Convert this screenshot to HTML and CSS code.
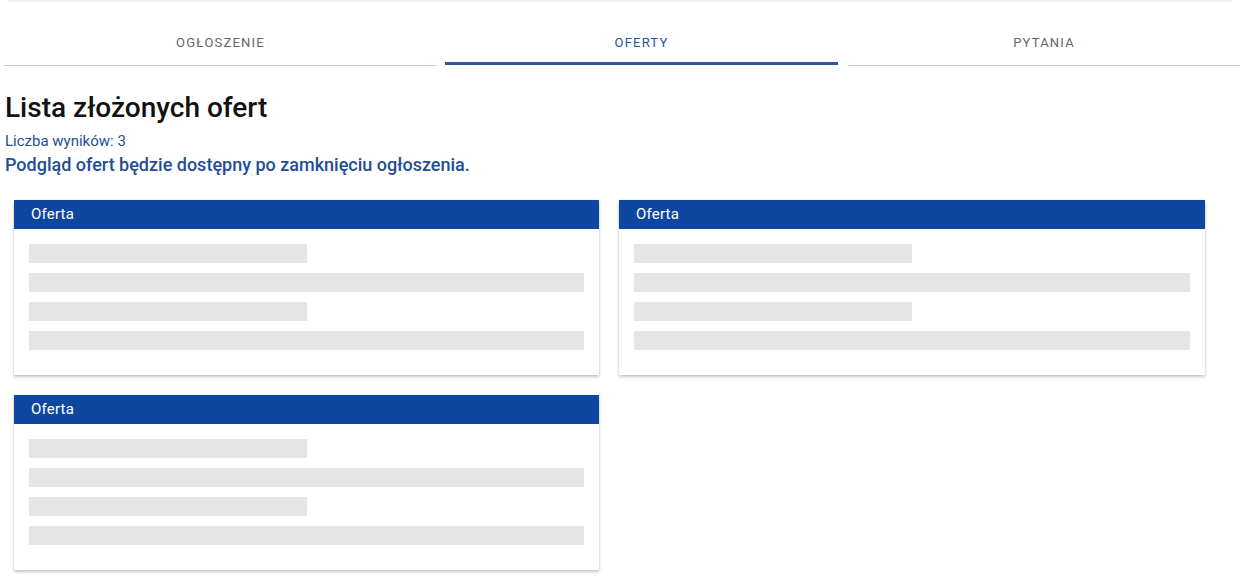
FILE: index.html
```html
<!DOCTYPE html>
<html lang="pl">
<head>
    <meta charset="UTF-8">
    <meta name="viewport" content="width=device-width, initial-scale=1.0">
    <title>Oferty</title>
    <link rel="stylesheet" href="styles.css">
</head>
<body>
    <div class="topbar"></div>

    <div class="tabs">
        <a href="#" class="tab tab-first">Ogłoszenie</a>
        <a href="#" class="tab tab-active">Oferty</a>
        <a href="#" class="tab tab-last">Pytania</a>
    </div>

    <div class="content">
        <h1 class="page-title">Lista złożonych ofert</h1>
        <div class="results">Liczba wyników: 3</div>
        <div class="notice">Podgląd ofert będzie dostępny po zamknięciu ogłoszenia.</div>

        <div class="offers">
            <div class="offer">
                <div class="offer-header">Oferta</div>
                <div class="offer-body">
                    <div class="skeleton half"></div>
                    <div class="skeleton"></div>
                    <div class="skeleton half"></div>
                    <div class="skeleton"></div>
                </div>
            </div>
            <div class="offer">
                <div class="offer-header">Oferta</div>
                <div class="offer-body">
                    <div class="skeleton half"></div>
                    <div class="skeleton"></div>
                    <div class="skeleton half"></div>
                    <div class="skeleton"></div>
                </div>
            </div>
            <div class="offer">
                <div class="offer-header">Oferta</div>
                <div class="offer-body">
                    <div class="skeleton half"></div>
                    <div class="skeleton"></div>
                    <div class="skeleton half"></div>
                    <div class="skeleton"></div>
                </div>
            </div>
        </div>
    </div>
</body>
</html>
```

FILE: styles.css
```css
body {
    margin: 0;
    padding: 0;
    font-family: Roboto, "Noto Sans", sans-serif;
    background-color: #fff;
    color: #111;
    overflow: hidden;
}

.topbar {
    height: 1px;
    margin: 0 8px;
    background-color: #f2f2f2;
    box-shadow: 0 1px 2px rgba(0, 0, 0, 0.06);
}

.tabs {
    display: flex;
    padding-left: 4px;
    margin-top: 28px;
    height: 37px;
}

.tab {
    display: block;
    box-sizing: border-box;
    text-align: center;
    text-decoration: none;
    text-transform: uppercase;
    font-size: 13px;
    letter-spacing: 1.2px;
    color: #666;
    padding-top: 6px;
    border-bottom: 1px solid #cfcfcf;
}

.tab-first {
    width: 433px;
}

.tab-active {
    width: 393px;
    margin-left: 8px;
    color: #24559c;
    border-bottom: 3px solid #2d5796;
    height: 36px;
}

.tab-last {
    width: 392px;
    margin-left: 10px;
}

.content {
    padding: 0 5px 10px;
}

.page-title {
    margin: 26px 0 0;
    font-size: 28px;
    font-weight: 500;
    line-height: 32px;
    color: #111;
}

.results {
    margin-top: 8px;
    font-size: 15px;
    line-height: 18px;
    color: #1f4e96;
}

.notice {
    margin-top: 4px;
    font-size: 18px;
    line-height: 22px;
    font-weight: 500;
    color: #1f4e96;
}

.offers {
    display: grid;
    grid-template-columns: 585px 586px;
    column-gap: 20px;
    row-gap: 20px;
    margin: 24px 0 0 9px;
}

.offer {
    background-color: #fff;
    box-shadow: 0 2px 3px rgba(0, 0, 0, 0.22), 0 0 2px rgba(0, 0, 0, 0.08);
}

.offer-header {
    height: 29px;
    line-height: 28px;
    padding-left: 17px;
    background-color: #0d47a1;
    color: #fff;
    font-size: 15px;
    letter-spacing: 0.2px;
}

.offer-body {
    padding: 15px 15px 25px;
}

.skeleton {
    height: 19px;
    background-color: #e5e5e5;
    margin-bottom: 10px;
}

.skeleton:last-child {
    margin-bottom: 0;
}

.skeleton.half {
    width: 50%;
}
```
